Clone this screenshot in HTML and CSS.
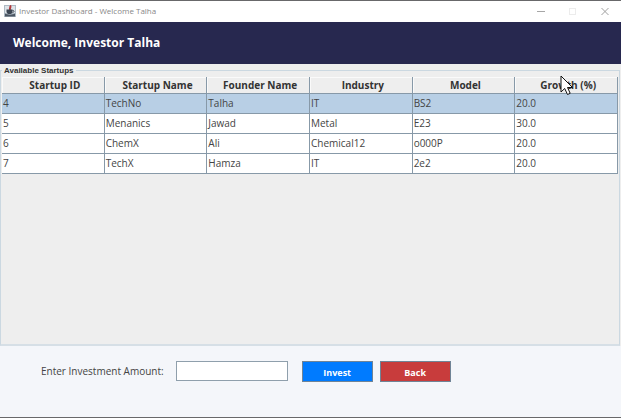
FILE: index.html
```html
<!DOCTYPE html>
<html lang="en">
<head>
<meta charset="utf-8">
<title>Investor Dashboard - Welcome Talha</title>
<link rel="stylesheet" href="styles.css">
</head>
<body>
<div class="window">
  <header class="titlebar">
    <svg class="app-icon" viewBox="0 0 12 12" aria-hidden="true">
      <rect width="12" height="12" fill="#aebac4"/>
      <rect x="1" y="1" width="10" height="7" fill="#dde3e8"/>
      <path d="M6 0.5C7.5 2 5 3 6.300 5" fill="none" stroke="#b2383b" stroke-width="2"/>
      <path d="M2.500 4.500h6v2c0 2-1.500 2.500-3 2.500s-3-.5-3-2.500z" fill="#3b4552"/>
      <path d="M8.500 5.500c2-.5 2 2 0 2" fill="none" stroke="#3b4552"/>
      <path d="M1 8.500c2 1.500 8 1.500 10 0v3H1z" fill="#4b5663"/>
    </svg>
    <span class="caption">Investor Dashboard - Welcome Talha</span>
    <div class="controls">
      <button type="button" aria-label="Minimize"><svg viewBox="0 0 10 10"><path d="M1 5.500h8" stroke="#a6a6a6"/></svg></button>
      <button type="button" aria-label="Maximize" disabled><svg viewBox="0 0 10 10"><rect x="1.500" y="2.500" width="6" height="6" fill="none" stroke="#ececec"/></svg></button>
      <button type="button" aria-label="Close"><svg viewBox="0 0 10 10"><path d="M1.500 2l7 7M8.500 2l-7 7" stroke="#a0a0a0"/></svg></button>
    </div>
  </header>
  <h1 class="banner">Welcome, Investor Talha</h1>
  <main class="content">
    <fieldset class="startups">
      <legend>Available Startups</legend>
      <table>
        <thead>
          <tr><th>Startup ID</th><th>Startup Name</th><th>Founder Name</th><th>Industry</th><th>Model</th><th>Growth (%)<svg class="pointer" viewBox="0 0 14 21" aria-hidden="true"><path d="M1 1v16l3.700-3.500 2.800 6 2.700-1.200-2.700-5.800h5z" fill="#fff" stroke="#111"/></svg></th></tr>
        </thead>
        <tbody>
          <tr class="selected"><td>4</td><td>TechNo</td><td>Talha</td><td>IT</td><td>BS2</td><td>20.0</td></tr>
          <tr><td>5</td><td>Menanics</td><td>Jawad</td><td>Metal</td><td>E23</td><td>30.0</td></tr>
          <tr><td>6</td><td>ChemX</td><td>Ali</td><td>Chemical12</td><td>o000P</td><td>20.0</td></tr>
          <tr><td>7</td><td>TechX</td><td>Hamza</td><td>IT</td><td>2e2</td><td>20.0</td></tr>
        </tbody>
      </table>
    </fieldset>
  </main>
  <form class="invest">
    <label for="amount">Enter Investment Amount:</label>
    <input id="amount" type="text">
    <button class="action primary" type="button">Invest</button>
    <button class="action danger" type="button">Back</button>
  </form>
</div>
</body>
</html>
```
FILE: styles.css
```css
* {
  box-sizing: border-box;
}

body {
  margin: 0;
  font-family: "Open Sans", "Noto Sans", sans-serif;
  font-size: 10px;
  color: #444;
}

.window {
  display: flex;
  flex-direction: column;
  min-height: 100vh;
  border-top: 1px solid #68686a;
  border-bottom: 1px solid #68686a;
  background: #f4f6fa;
}

.titlebar {
  display: flex;
  align-items: center;
  height: 21px;
  padding: 0 0 2px 4px;
  gap: 3px;
  background: #fff;
}

.app-icon {
  width: 12px;
  height: 12px;
}

.caption {
  font-size: 8px;
  color: #888;
}

.controls {
  display: flex;
  margin-left: auto;
}

.controls button {
  display: grid;
  place-items: center;
  width: 32px;
  height: 18px;
  padding: 0;
  border: 0;
  background: none;
}

.controls svg {
  width: 10px;
  height: 10px;
}

.banner {
  margin: 0;
  padding: 0 13px;
  font-size: 12px;
  line-height: 42px;
  color: #fff;
  background: #27284f;
}

.content {
  display: flex;
  flex: 1;
  padding: 1px 1px 0 0;
  background: #eee;
}

.startups {
  flex: 1;
  min-width: 0;
  margin: 0;
  padding: 1px 1px 0;
  border: 1px solid #cbd8e1;
  border-bottom: 2px solid #d6dfe6;
}

.startups legend {
  padding: 0 2px;
  font: bold 8px/11px "Liberation Sans", sans-serif;
  color: #333;
}

table {
  width: 100%;
  table-layout: fixed;
  border-collapse: separate;
  border-spacing: 0;
}

th {
  position: relative;
  height: 17px;
  padding: 0 0 0 4px;
  font-size: 10px;
  line-height: 16px;
  color: #333;
  border-right: 1px solid #8799a8;
  border-bottom: 1px solid #8799a8;
  box-shadow: inset 1px 1px #fafafa;
}

td {
  padding: 0 1px;
  font-size: 10px;
  line-height: 19px;
  background: #fff;
  border-right: 1px solid #8799a8;
  border-bottom: 1px solid #8799a8;
}

.selected td {
  background: #b8cfe5;
}

.pointer {
  position: absolute;
  left: 45px;
  top: -2px;
  width: 14px;
  height: 21px;
}

.invest {
  display: flex;
  align-items: flex-start;
  height: 71px;
  padding: 15px 41px 0;
}

.invest label {
  margin-right: 12px;
  font-size: 10px;
  line-height: 20px;
}

.invest input {
  width: 112px;
  height: 20px;
  margin-right: 14px;
  padding: 0 3px;
  font: inherit;
  border: 1px solid #8f9fac;
  background: #fff;
}

.action {
  width: 71px;
  height: 21px;
  margin-right: 7px;
  padding: 1px 0 0;
  font: bold 9px "Open Sans", sans-serif;
  color: #fff;
  border: 1px solid #708496;
}

.primary {
  background: #007bff;
}

.danger {
  background: #c83c3c;
}
```
